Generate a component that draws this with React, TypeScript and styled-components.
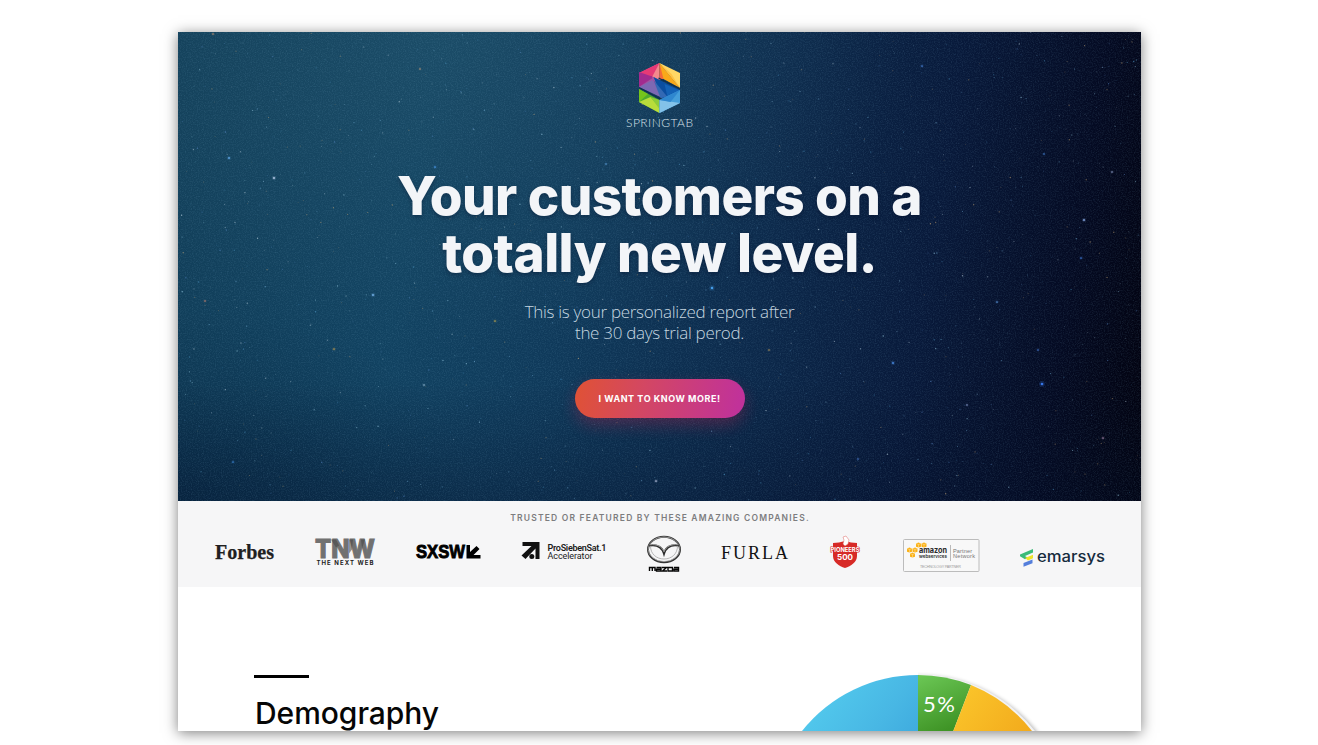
import React from "react";
import styled, { createGlobalStyle } from "styled-components";

const GlobalStyle = createGlobalStyle`
  * { box-sizing: border-box; }
  html, body { margin: 0; padding: 0; background: #fff; overflow: hidden; }
`;

const Stage = styled.div`
  width: 1318px;
  height: 745px;
  padding: 32px 177px 14px 178px;
  overflow: hidden;
`;

const Frame = styled.main`
  display: flex;
  flex-direction: column;
  width: 963px;
  height: 699px;
  background: #fff;
  box-shadow: 0 2px 13px rgba(0, 0, 0, 0.5);
`;

const Hero = styled.header`
  position: relative;
  display: flex;
  flex-direction: column;
  align-items: center;
  flex: none;
  height: 469px;
  padding-top: 30px;
  text-align: center;
  background:
    linear-gradient(180deg, transparent 75%, rgba(3, 14, 40, 0.35) 100%),
    radial-gradient(ellipse 460px 320px at 28% 0%, rgba(50, 100, 118, 0.3), transparent),
    radial-gradient(ellipse 300px 190px at 0% 100%, rgba(3, 30, 58, 0.5), transparent),
    linear-gradient(99deg, #113e59 0%, #114261 25%, #0f395a 42%, #0c294b 60%, #08193a 76%, #040a22 90%, #02020e 100%);
`;

const Sky = styled.svg`
  position: absolute;
  inset: 0;
`;

const HeroBody = styled.div`
  position: relative;
  display: flex;
  flex-direction: column;
  align-items: center;
`;

const Headline = styled.h1`
  margin: 39px 0 0;
  color: #f3f5f8;
  font: 800 53px/57px Inter, sans-serif;
  white-space: nowrap;
  text-shadow: 0 2px 4px rgba(0, 10, 35, 0.35);
`;

const HeadlineLine = styled.span<{ $tracking: number }>`
  display: block;
  letter-spacing: ${({ $tracking }) => $tracking}px;
`;

const Lead = styled.p`
  margin: 19px 0 0;
  color: rgba(222, 232, 242, 0.9);
  font: 300 17px/21px "Open Sans", sans-serif;
  letter-spacing: -0.3px;
  white-space: nowrap;
`;

const Cta = styled.button`
  width: 170px;
  height: 39px;
  margin: 36px 0 0;
  padding: 0;
  border: 0;
  border-radius: 20px;
  background: linear-gradient(100deg, #df5138 3%, #d34763 40%, #c13299 95%);
  box-shadow: 0 7px 16px rgba(190, 30, 75, 0.32);
  color: #fff;
  font: 700 9px/39px Inter, sans-serif;
  letter-spacing: 0.55px;
  white-space: nowrap;
`;

const Trusted = styled.section`
  flex: none;
  height: 86px;
  padding: 11px 36px 0 37px;
  background: #f6f6f7;
`;

const TrustedTitle = styled.h2`
  margin: 0;
  color: #7d7d7f;
  font: 600 8.5px/12px Inter, sans-serif;
  letter-spacing: 1.2px;
  text-align: center;
  white-space: nowrap;
`;

const LogoRow = styled.div`
  display: flex;
  justify-content: space-between;
  margin-top: 11px;
`;

const Logo = styled.svg`
  display: block;
  flex: none;
  overflow: visible;
`;

const Report = styled.section`
  display: flex;
  justify-content: space-between;
  flex: 1;
  min-height: 0;
  padding: 78px 62px 0 76px;
  overflow: hidden;
`;

const Heading = styled.div`
  padding-top: 10px;
`;

const Rule = styled.div`
  width: 55px;
  height: 3px;
  background: #000;
`;

const Title = styled.h3`
  margin: 16px 0 0 1px;
  color: #060606;
  font: 500 30px/38px Inter, sans-serif;
  letter-spacing: -0.05px;
`;

const Chart = styled.svg`
  display: block;
  flex: none;
`;

type Star = { x: number; y: number; r: number; o: number; c: string };

const tints = ["#9ed0e8", "#6fa8cf", "#c6dbe8", "#4f96c4", "#c9a878", "#5f8fd0"];

function scatter(count: number): Star[] {
  let seed = 90210;
  const next = () => {
    seed = (seed * 1664525 + 1013904223) % 4294967296;
    return seed / 4294967296;
  };
  return Array.from({ length: count }, () => {
    const r = 0.3 + next() * 0.45;
    return { x: next() * 963, y: next() * 468, r, o: 0.15 + next() * 0.5, c: tints[Math.floor(next() * 6)] };
  });
}

const bright: Star[] = [
  [534, 256, 1.5, "#4aa5f5"], [864, 352, 1.6, "#3b7df5"], [715, 331, 1.2, "#4d8fe8"],
  [51, 126, 1.1, "#66adf0"], [96, 146, 1.2, "#bcd0f0"], [195, 263, 1.2, "#79b7f0"],
  [257, 135, 1, "#4b9cf0"], [27, 269, 0.9, "#cf8876"], [156, 317, 1, "#bf9a50"],
  [906, 188, 1.1, "#8fb2ee"], [903, 226, 1, "#447ee0"], [819, 270, 1, "#5894d8"],
  [478, 449, 1, "#c1cbe8"], [789, 373, 0.9, "#8b9fd0"], [55, 430, 1, "#3b83d0"],
  [246, 353, 0.9, "#9bc0da"], [680, 427, 0.9, "#4978cc"], [744, 34, 1, "#4a83d8"],
  [317, 289, 1, "#b5a24d"], [591, 318, 0.9, "#b89c60"], [428, 132, 0.8, "#63a9e8"],
  [866, 122, 0.9, "#4383d8"], [35, 2, 0.9, "#c99675"], [242, 37, 0.8, "#cba07c"],
  [925, 406, 1, "#9e83a8"], [860, 318, 0.9, "#4881df"], [934, 140, 0.9, "#99acd8"],
].map(([x, y, r, c]) => ({ x, y, r, o: 0.9, c }) as Star);

const field = scatter(1500);

function NightSky() {
  return (
    <Sky width="963" height="469" viewBox="0 0 963 469" aria-hidden="true">
      <defs>
        <filter id="grain" x="0" y="0" width="100%" height="100%">
          <feTurbulence type="fractalNoise" baseFrequency="0.83 0.79" numOctaves="2" seed="8" />
          <feColorMatrix values="0 0 0 0 0.25  0 0 0 0 0.5  0 0 0 0 0.68  1.5 0 0 0 -0.62" />
        </filter>
      </defs>
      <rect width="963" height="469" filter="url(#grain)" opacity="0.2" />
      {field.map((s, i) => (
        <circle key={i} cx={s.x} cy={s.y} r={s.r} fill={s.c} opacity={s.o} />
      ))}
      {bright.map((s, i) => (
        <g key={i} fill={s.c}>
          <circle cx={s.x} cy={s.y} r={s.r * 1.8} opacity="0.18" />
          <circle cx={s.x} cy={s.y} r={s.r * 0.85} opacity={s.o} />
        </g>
      ))}
    </Sky>
  );
}

function SpringTab() {
  return (
    <Logo width="70" height="67" viewBox="0.5 0 70 67">
      <path d="M35 1 14.500 11l14 4z" fill="#f0508b" />
      <path d="M35 1 14.500 11v4L29 14z" fill="#e63a76" />
      <path d="M35 1 27 16l8 2z" fill="#f4898d" />
      <path d="M35 1v17l7-2z" fill="#f36a38" />
      <path d="M35 1 55.500 11v15z" fill="#ffd765" />
      <path d="M35 1 55.500 26 39 17z" fill="#f9a91a" />
      <path d="M35 1 55.500 26 47 12z" fill="#ffc243" />
      <path d="M14.500 10 29 15 14.500 26z" fill="#a22b8f" />
      <path d="M14.500 25 29 15l6 3-2 14z" fill="#a650a2" />
      <path d="M14.500 25 28 18l10 18z" fill="#7d68b3" />
      <path d="M29 15 55.500 28v1L38 37z" fill="#0b4ea0" />
      <path d="M29 18 43 35l-7 1z" fill="#3369b4" />
      <path d="M43 35 55.500 28.500 40 22z" fill="#1462b6" />
      <path d="M14.500 25.500 36 37" stroke="#0d2f50" strokeWidth="1.300" />
      <path d="M14.500 27 35 38v13L14.500 40z" fill="#4eaa2d" />
      <path d="M14.500 27v13l9-8z" fill="#75c41c" />
      <path d="M14.500 40 35 51V45L26 35z" fill="#b8dc3b" />
      <path d="m26 35 9 3v9z" fill="#8dcb3a" />
      <path d="M35 38 55.500 28v13L35 51z" fill="#459eda" />
      <path d="M35 38 55.500 41 35 51z" fill="#83c2e9" />
      <path d="M35 38 55.500 28 46 40z" fill="#2f87cf" />
      <path d="m34 16 21 10.500" stroke="#0d2f50" strokeWidth="1.200" />
      <text x="1.500" y="65" textLength="67" fill="#d8e2ea" fontFamily="Lato" fontWeight="300" fontSize="12">SPRINGTAB</text>
    </Logo>
  );
}

function Forbes() {
  return (
    <Logo width="59" height="40" viewBox="0 0 59 40">
      <text x="0" y="24" textLength="59" lengthAdjust="spacingAndGlyphs" fill="#202020" stroke="#202020" strokeWidth=".25" fontFamily="Liberation Serif" fontWeight="700" fontSize="21">Forbes</text>
    </Logo>
  );
}

function NextWeb() {
  return (
    <Logo width="60" height="40" viewBox="0 0 60 40">
      <text x="0" y="23" textLength="60" lengthAdjust="spacingAndGlyphs" fill="#717171" stroke="#717171" strokeWidth="1" fontFamily="Inter" fontWeight="800" fontSize="25.500">TNW</text>
      <path d="M16 4.500h5l3 6-3 2zM34 4.500h4l-1 10-3 4zM46 4.500h4l-3 9z" fill="#444" opacity=".55" />
      <text x="1.500" y="33" textLength="57" fill="#1c1c1c" fontFamily="Inter" fontWeight="700" fontSize="6" transform="translate(0 -3)">THE NEXT WEB</text>
    </Logo>
  );
}

function Sxsw() {
  return (
    <Logo width="65" height="40" viewBox="0 0 65 40">
      <text x="0" y="23" textLength="49" lengthAdjust="spacingAndGlyphs" stroke="#000" strokeWidth=".9" fontFamily="Liberation Sans" fontWeight="700" fontSize="18.500">SXSW</text>
      <path d="M50.500 10v13.500h14v-3.500h-7l6-6-3-3-6.500 6V10z" />
    </Logo>
  );
}

function ProSieben() {
  return (
    <Logo width="86" height="40" viewBox="0 0 86 40">
      <g transform="translate(-.5 0)" fill="#111">
        <path d="M1 7h17v17h-4V13.500L4 24 0 20.500 10 11H1z" />
        <circle cx="10.300" cy="21.600" r="2.500" />
      </g>
      <g fill="#1b1b1b" fontFamily="Roboto" fontSize="9">
        <text x="25.500" y="15.500" textLength="59" fontWeight="600">ProSiebenSat.1</text>
        <text x="25.500" y="24" textLength="45">Accelerator</text>
      </g>
    </Logo>
  );
}

function Mazda() {
  return (
    <Logo width="35" height="40" viewBox="0 0 35 40">
      <g transform="translate(-2.500 0)">
        <ellipse cx="17.500" cy="14.500" rx="16" ry="12.700" fill="none" stroke="#343434" strokeWidth="2" />
        <ellipse cx="17.500" cy="14.200" rx="15.800" ry="12.300" fill="none" stroke="#b9b9b9" strokeWidth=".7" />
        <path d="M2.500 10.500C10 9 15.500 12 17.500 18.500 19.500 12 25 9 32.500 10.500" fill="none" stroke="#2c2c2c" strokeWidth="2.200" />
        <path d="M3 9.800c8-1 12.500 2 14.500 7 2-5 6.500-8 14.500-7" fill="none" stroke="#bdbdbd" strokeWidth=".8" />
        <path d="M4 11c0 8 6 13 13.500 13S31 19 31 11" fill="none" stroke="#a7a7a7" strokeWidth=".8" />
        <path d="M3 36v-3.500h5.500V36M5.800 32.500V36M10 32.500h4.500V36H10v-1.700h4M15.500 32.500H20L16 36h4.500M26 32.500V36h-4.500v-3.500zM27.500 32.500H32V36h-4.500v-1.700H32" fill="none" stroke="#050505" strokeWidth="1.400" />
      </g>
    </Logo>
  );
}

function Furla() {
  return (
    <Logo width="67" height="40" viewBox="0 0 67 40">
      <text x="-3" y="24" textLength="67" fill="#111" fontFamily="Liberation Serif" fontSize="18">FURLA</text>
    </Logo>
  );
}

function Pioneers() {
  return (
    <Logo width="30" height="40" viewBox="0 0 30 40">
      <g transform="translate(-2 0)">
        <path d="M3 8c4 0 8-1 12-2 4 1 8 2 12 2v13c0 6-6 10-12 12C9 31 3 27 3 21z" fill="#d72a27" />
        <path d="m13 2 3-1 3 4-1 4-3 2-2-2 1-4z" fill="#fff" stroke="#de6967" strokeWidth=".5" />
        <g fontFamily="Inter" fontWeight="700" paintOrder="stroke" strokeLinejoin="round">
          <text x=".5" y="16.500" textLength="29" lengthAdjust="spacingAndGlyphs" fontSize="6.500" fill="#fff" stroke="#d72a27" strokeWidth="1.200">PIONEERS</text>
          <text x="7" y="25" textLength="16" lengthAdjust="spacingAndGlyphs" fontSize="7.500" fill="#fff">500</text>
        </g>
      </g>
    </Logo>
  );
}

const cubes = [[13, 4], [18.5, 4], [4, 9], [9.5, 9], [7, 14]];

function Amazon() {
  return (
    <Logo width="76" height="40" viewBox="0 0 76 40">
      <rect x=".5" y="4.500" width="75.500" height="32" rx="1" fill="#f8f8f8" stroke="#bcbcbc" />
      {cubes.map(([x, y]) => (
        <g key={`${x}-${y}`} transform={`translate(${x} ${y + 3.5})`}>
          <path d="M0 1 2.500 0 5 1v3.200L2.500 5 0 4.200z" fill="#fbb116" />
          <path d="M0 1l2.500 1L5 1M2.500 2v3" fill="none" stroke="#fff0c8" strokeWidth=".45" />
        </g>
      ))}
      <g fill="#292929" fontFamily="Inter">
        <text x="16" y="17.500" textLength="28" lengthAdjust="spacingAndGlyphs" fontWeight="700" fontSize="7.800">amazon</text>
        <text x="16" y="22.500" textLength="28" lengthAdjust="spacingAndGlyphs" fontWeight="600" fontSize="5">webservices</text>
      </g>
      <path d="M47.500 10v16" stroke="#aaa" strokeWidth=".8" />
      <g fill="#777" fontFamily="Liberation Sans">
        <text x="50" y="17.500" textLength="19" fontSize="5.600">Partner</text>
        <text x="50" y="23" textLength="22" fontSize="5.600">Network</text>
        <text x="17" y="32.500" textLength="41" fontSize="3.700" fill="#999">TECHNOLOGY PARTNER</text>
      </g>
    </Logo>
  );
}

function Emarsys() {
  return (
    <Logo width="85" height="40" viewBox="0 0 85 40">
      <path d="M0 19.500 13 14v3.500L5 21l3 2-3 1.200-5-3z" fill="#3abb78" />
      <path d="m5 23 8-3.300v3.600L8 25.500z" fill="#efe329" />
      <path d="M3.500 28 12.500 24.500v3.700l-9 3.500z" fill="#547edb" />
      <text x="17" y="27" textLength="68" lengthAdjust="spacingAndGlyphs" fill="#152b3d" fontFamily="Inter" fontWeight="500" fontSize="15">emarsys</text>
    </Logo>
  );
}

function AgeChart() {
  return (
    <Chart width="310" height="66" viewBox="0 0 310 66">
      <defs>
        <linearGradient id="blue" x1="0" y1="0" x2="1" y2="1">
          <stop offset="0" stopColor="#56d0f0" />
          <stop offset=".5" stopColor="#48b7e4" />
          <stop offset="1" stopColor="#3299d6" />
        </linearGradient>
        <linearGradient id="green" gradientUnits="userSpaceOnUse" x1="145" y1="10" x2="170" y2="68">
          <stop offset="0" stopColor="#6dc957" />
          <stop offset="1" stopColor="#3f9426" />
        </linearGradient>
        <linearGradient id="yellow" gradientUnits="userSpaceOnUse" x1="190" y1="20" x2="260" y2="75">
          <stop offset="0" stopColor="#fbc62b" />
          <stop offset="1" stopColor="#f2a91c" />
        </linearGradient>
        <filter id="soft"><feGaussianBlur stdDeviation="2" /></filter>
      </defs>
      <circle cx="152" cy="159" r="148" fill="#000" opacity=".3" filter="url(#soft)" />
      <path d="M-10 0h159v66H-10z" fill="#fff" />
      <path d="M149 9a149 149 0 0 1 117 57H149z" fill="#f2f2f4" />
      <path d="M149 158V10A148 148 0 0 0 33 66z" fill="url(#blue)" />
      <path d="M149 158V10a148 148 0 0 1 53 10z" fill="url(#green)" />
      <path d="M149 158 202 20a148 148 0 0 1 61 46z" fill="url(#yellow)" />
      <text x="154" y="47" textLength="32" fill="#fff" fontFamily="Lato" fontSize="22">5%</text>
    </Chart>
  );
}

export default function App() {
  return (
    <>
      <GlobalStyle />
      <Stage>
        <Frame>
          <Hero>
            <NightSky />
            <HeroBody>
              <SpringTab />
              <Headline>
                <HeadlineLine $tracking={-0.6}>Your customers on a</HeadlineLine>
                <HeadlineLine $tracking={-0.55}>totally new level.</HeadlineLine>
              </Headline>
              <Lead>This is your personalized report after<br />the 30 days trial perod.</Lead>
              <Cta>I WANT TO KNOW MORE!</Cta>
            </HeroBody>
          </Hero>
          <Trusted>
            <TrustedTitle>TRUSTED OR FEATURED BY THESE AMAZING COMPANIES.</TrustedTitle>
            <LogoRow>
              <Forbes />
              <NextWeb />
              <Sxsw />
              <ProSieben />
              <Mazda />
              <Furla />
              <Pioneers />
              <Amazon />
              <Emarsys />
            </LogoRow>
          </Trusted>
          <Report>
            <Heading>
              <Rule />
              <Title>Demography</Title>
            </Heading>
            <AgeChart />
          </Report>
        </Frame>
      </Stage>
    </>
  );
}
